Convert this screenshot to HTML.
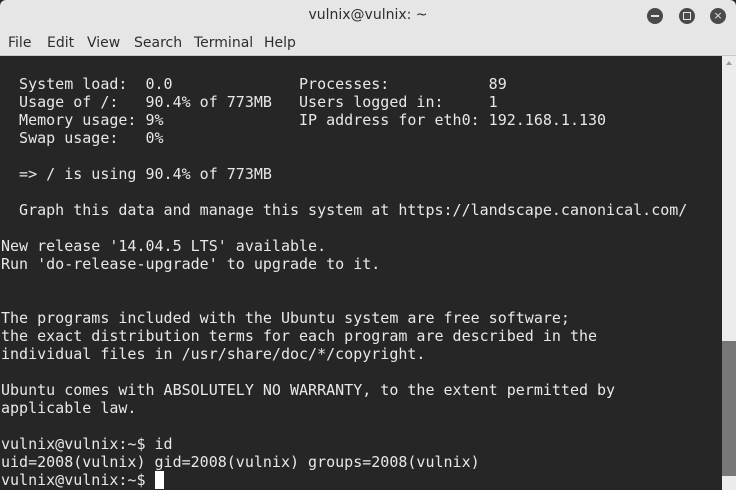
<!DOCTYPE html>
<html><head><style>
body{margin:0;width:736px;height:490px;overflow:hidden;background:#262626;font-family:"DejaVu Sans",sans-serif;}
#title{position:absolute;top:0;left:0;width:736px;height:31px;background:#e6e6e6;border-radius:6px 6px 0 0;text-align:center;font-size:14px;line-height:31px;color:#2e2e2e;}
.btn{position:absolute;top:8px;width:16px;height:16px;border-radius:50%;background:#4a4a4a;}
#menu{position:absolute;top:31px;left:0;width:736px;height:25px;background:#e6e6e6;border-bottom:1px solid #c8c8c8;box-sizing:border-box;font-size:14px;color:#2e2e2e;}
#menu span{position:absolute;top:4px;}
#term{position:absolute;top:57px;left:1px;width:721px;height:433px;color:#e8e8e8;font-family:"DejaVu Sans Mono","Liberation Mono",monospace;font-size:15px;line-height:18px;white-space:pre;}
#sb{position:absolute;top:56px;left:722px;width:14px;height:434px;background:#ececec;}
#thumb{position:absolute;top:341px;left:722px;width:14px;height:135px;background:#777;}
</style></head><body>
<div id="title">vulnix@vulnix: ~
<div class="btn" style="left:647px"><div style="position:absolute;left:4px;top:7px;width:8px;height:2px;background:#e6e6e6"></div></div>
<div class="btn" style="left:679px"><div style="position:absolute;left:4px;top:4px;width:6px;height:6px;border:1px solid #e6e6e6"></div></div>
<div class="btn" style="left:710px;color:#e6e6e6;font-size:11px;line-height:16px;text-align:center">×</div>
</div>
<div id="menu"><span style="left:8px">File</span><span style="left:47px">Edit</span><span style="left:87px">View</span><span style="left:134px">Search</span><span style="left:194px">Terminal</span><span style="left:264px">Help</span></div>
<div id="term">
  System load:  0.0              Processes:           89
  Usage of /:   90.4% of 773MB   Users logged in:     1
  Memory usage: 9%               IP address for eth0: 192.168.1.130
  Swap usage:   0%

  => / is using 90.4% of 773MB

  Graph this data and manage this system at https://landscape.canonical.com/

New release '14.04.5 LTS' available.
Run 'do-release-upgrade' to upgrade to it.


The programs included with the Ubuntu system are free software;
the exact distribution terms for each program are described in the
individual files in /usr/share/doc/*/copyright.

Ubuntu comes with ABSOLUTELY NO WARRANTY, to the extent permitted by
applicable law.

vulnix@vulnix:~$ id
uid=2008(vulnix) gid=2008(vulnix) groups=2008(vulnix)
vulnix@vulnix:~$ <span style="background:#fff">&nbsp;</span></div>
<div id="sb"><div style="position:absolute;left:4px;top:5px;border:3px solid transparent;border-bottom:4px solid #999;border-top:0"></div></div>
<div id="thumb"></div>
</body></html>
